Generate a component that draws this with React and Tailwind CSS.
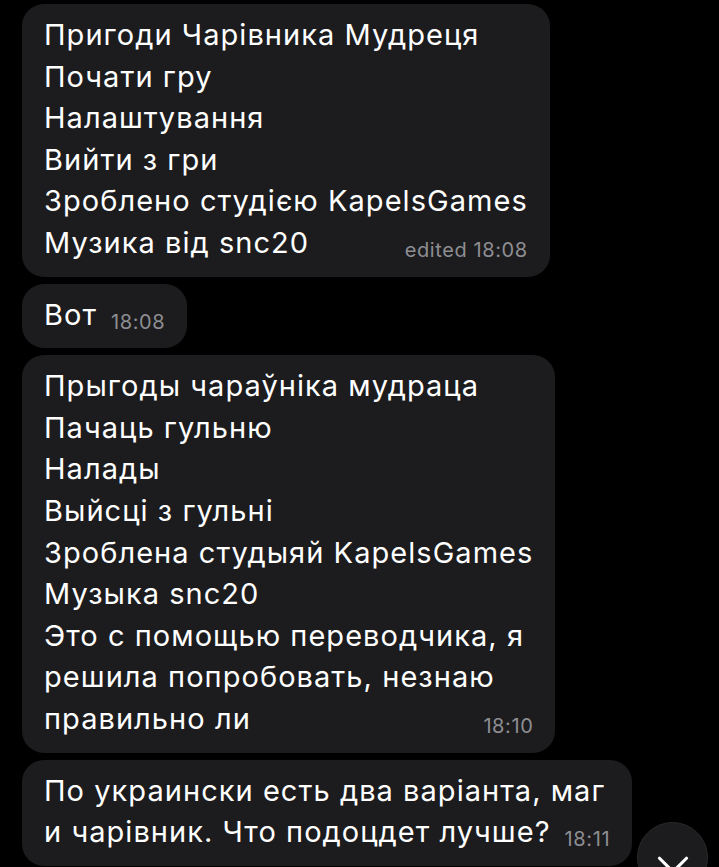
import { ChevronDown } from 'lucide-react';

const messages = [
    {
        lines: [
            'Пригоди Чарівника Мудреця',
            'Почати гру',
            'Налаштування',
            'Вийти з гри',
            'Зроблено студією KapelsGames',
            'Музика від snc20',
        ],
        time: 'edited 18:08',
    },
    { lines: ['Вот'], time: '18:08' },
    {
        lines: [
            'Прыгоды чараўніка мудраца',
            'Пачаць гульню',
            'Налады',
            'Выйсці з гульні',
            'Зроблена студыяй KapelsGames',
            'Музыка snc20',
            'Это с помощью переводчика, я',
            'решила попробовать, незнаю',
            'правильно ли',
        ],
        time: '18:10',
    },
    {
        lines: ['По украински есть два варіанта, маг', 'и чарівник. Что подоцдет лучше?'],
        time: '18:11',
    },
];

/**
 * Bubble - входящее сообщение, время прижато к последней строке
 */
const Bubble = ({ lines, time }) => {
    const head = lines.slice(0, -1);
    const last = lines[lines.length - 1];

    return (
        <div className="w-fit rounded-[22px] bg-[#1c1c1e] pl-[22px] pr-[22px] pt-[10px] pb-[9px] text-[29px] leading-[41.6px] tracking-[0.036em] text-white">
            {head.map((line) => (
                <div key={line}>{line}</div>
            ))}
            <div className="flex items-baseline">
                <span>{last}</span>
                <span className="ml-auto pl-[14px] text-[20px] tracking-[0.03em] text-[#8e8e93] translate-y-[4px] whitespace-nowrap">
                    {time}
                </span>
            </div>
        </div>
    );
};

const App = () => {
    return (
        <div
            className="relative h-[867px] w-[719px] overflow-hidden bg-black"
            style={{ fontFamily: 'Inter, "Noto Sans", sans-serif' }}
        >
            <div className="flex flex-col gap-[7px] pl-[22px] pt-[4px]">
                {messages.map((m) => (
                    <Bubble key={m.time} lines={m.lines} time={m.time} />
                ))}
            </div>

            {/* кнопка прокрутки вниз */}
            <button
                type="button"
                className="absolute left-[637px] top-[822px] flex h-[71px] w-[71px] items-center justify-center rounded-full border border-[#2a2a2c] bg-[#1c1c1e]"
            >
                <ChevronDown className="mt-[14px] h-[54px] w-[54px] text-white" strokeWidth={1.4} />
            </button>
        </div>
    );
};

export default App;
